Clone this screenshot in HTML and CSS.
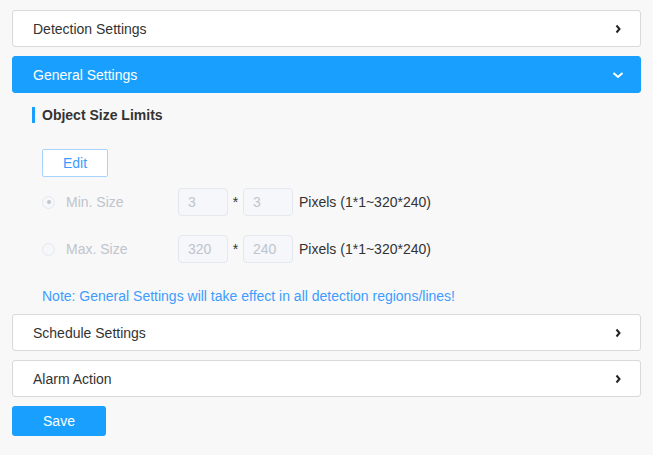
FILE: index.html
```html
<!DOCTYPE html>
<html>
<head>
<meta charset="utf-8">
<link rel="stylesheet" href="styles.css">
</head>
<body>
<div class="page">
  <div class="panel">
    <span class="panel-title">Detection Settings</span>
    <svg class="chev" width="10" height="10" viewBox="0 0 10 10"><polyline points="3.5,1.5 6.5,5 3.5,8.5" fill="none" stroke="#222" stroke-width="2"/></svg>
  </div>
  <div class="panel active">
    <span class="panel-title">General Settings</span>
    <svg class="chev" width="12" height="10" viewBox="0 0 12 10"><polyline points="1.5,3 6,7 10.5,3" fill="none" stroke="#fff" stroke-width="2"/></svg>
  </div>
  <div class="content">
    <div class="sub-title">Object Size Limits</div>
    <button class="edit-btn">Edit</button>
    <div class="row">
      <label class="radio-label"><span class="radio checked"></span><span>Min. Size</span></label>
      <span class="input">3</span>
      <span class="times">*</span>
      <span class="input">3</span>
      <span class="unit">Pixels (1*1~320*240)</span>
    </div>
    <div class="row row2">
      <label class="radio-label"><span class="radio"></span><span>Max. Size</span></label>
      <span class="input">320</span>
      <span class="times">*</span>
      <span class="input">240</span>
      <span class="unit">Pixels (1*1~320*240)</span>
    </div>
    <div class="note">Note: General Settings will take effect in all detection regions/lines!</div>
  </div>
  <div class="panel">
    <span class="panel-title">Schedule Settings</span>
    <svg class="chev" width="10" height="10" viewBox="0 0 10 10"><polyline points="3.5,1.5 6.5,5 3.5,8.5" fill="none" stroke="#222" stroke-width="2"/></svg>
  </div>
  <div class="panel">
    <span class="panel-title">Alarm Action</span>
    <svg class="chev" width="10" height="10" viewBox="0 0 10 10"><polyline points="3.5,1.5 6.5,5 3.5,8.5" fill="none" stroke="#222" stroke-width="2"/></svg>
  </div>
  <button class="save-btn">Save</button>
</div>
</body>
</html>
```

FILE: styles.css
```css
html, body {
  margin: 0;
  padding: 0;
  background: #f8f8f8;
  font-family: "Liberation Sans", Arial, sans-serif;
  color: #333;
}
.page {
  padding: 10px 12px;
  display: flex;
  flex-direction: column;
}
.panel {
  height: 37px;
  box-sizing: border-box;
  border: 1px solid #d9d9d9;
  border-radius: 3px;
  background: #fff;
  display: flex;
  align-items: center;
  justify-content: space-between;
  padding: 0 17px 0 20px;
  font-size: 14px;
  color: #333;
}
.panel + .panel {
  margin-top: 9px;
}
.panel.active {
  background: #199ffe;
  border-color: #199ffe;
  color: #fff;
  padding-right: 16px;
}
.chev {
  display: block;
}
.content {
  height: 221px;
  box-sizing: border-box;
  padding: 14px 0 0 20px;
  display: flex;
  flex-direction: column;
  align-items: flex-start;
}
.sub-title {
  border-left: 3px solid #199ffe;
  padding-left: 7px;
  font-size: 14px;
  font-weight: bold;
  line-height: 16px;
  height: 16px;
  color: #333;
}
.edit-btn {
  margin: 26px 0 0 10px;
  width: 66px;
  height: 28px;
  box-sizing: border-box;
  border: 1px solid #a8d3ff;
  border-radius: 2px;
  background: #fff;
  color: #3d9cff;
  font-family: inherit;
  font-size: 14px;
  padding: 0;
}
.row {
  margin: 11px 0 0 10px;
  height: 28px;
  display: flex;
  align-items: center;
  font-size: 14px;
  line-height: 16px;
}
.row2 {
  margin-top: 19px;
}
.radio-label {
  width: 136px;
  display: flex;
  align-items: center;
  gap: 11px;
  color: #c0c4cc;
}
.radio {
  width: 13px;
  height: 13px;
  box-sizing: border-box;
  border: 1px solid #e4e7ed;
  border-radius: 50%;
  background: #f5f7fa;
  display: flex;
  align-items: center;
  justify-content: center;
}
.radio.checked::after {
  content: "";
  width: 4px;
  height: 4px;
  border-radius: 50%;
  background: #c0c4cc;
}
.input {
  width: 50px;
  height: 28px;
  box-sizing: border-box;
  border: 1px solid #e4e7ed;
  border-radius: 4px;
  background: #f5f7fa;
  color: #c0c4cc;
  padding-left: 9px;
  display: flex;
  align-items: center;
  font-size: 14px;
}
.times {
  width: 15px;
  text-align: center;
  color: #333;
}
.unit {
  margin-left: 6px;
  color: #333;
}
.note {
  margin: 25px 0 0 10px;
  font-size: 14px;
  line-height: 16px;
  color: #3d9cff;
}
.save-btn {
  margin-top: 9px;
  width: 94px;
  height: 30px;
  border: none;
  border-radius: 3px;
  background: #199ffe;
  color: #fff;
  font-family: inherit;
  font-size: 14px;
  padding: 0;
}
```
